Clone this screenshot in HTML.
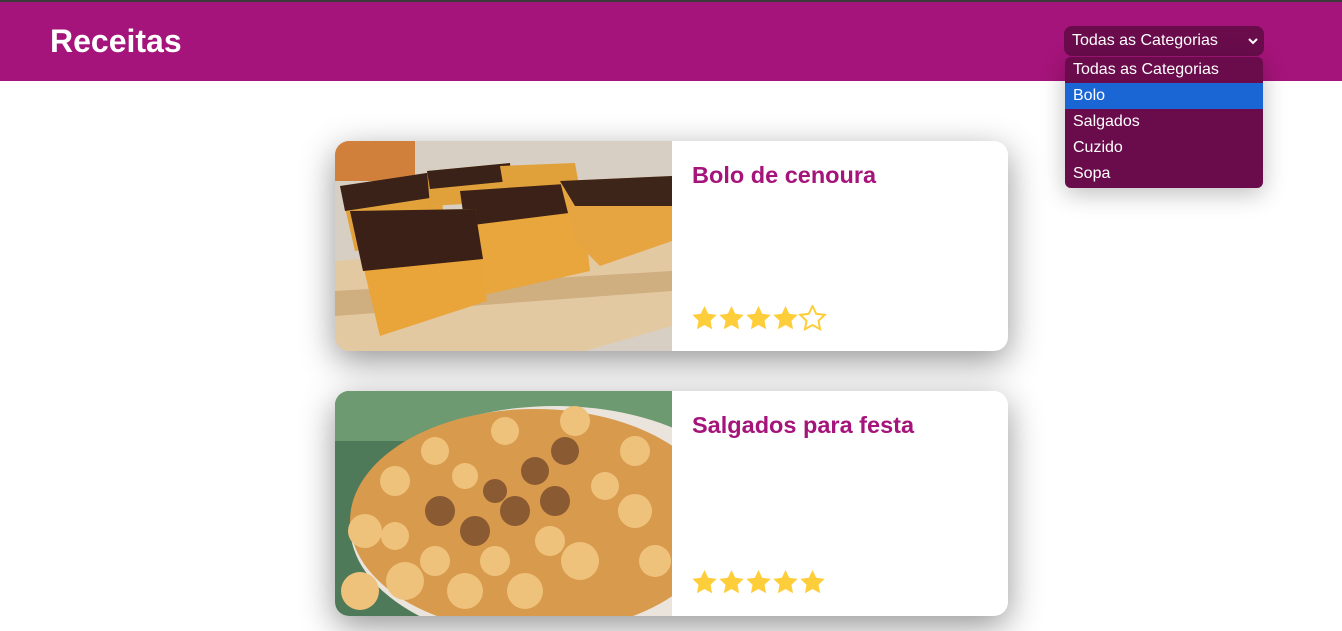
<!DOCTYPE html>
<html><head><meta charset="utf-8"><style>
*{margin:0;padding:0;box-sizing:border-box}
body{width:1342px;height:631px;overflow:hidden;background:#fff;font-family:"Liberation Sans",Arial,sans-serif;position:relative}
.top{position:absolute;left:0;top:0;width:1342px;height:2px;background:#3a3a3a}
header{position:absolute;left:0;top:2px;width:1342px;height:79px;background:#a5147a}
h1{position:absolute;left:50px;top:21px;color:#fff;font-size:32px;font-weight:bold}
.sel{position:absolute;left:1064px;top:26px;width:200px;height:30px;background:#6a0c4c;border-radius:8px;color:#fff;font-size:16px;padding:6px 8px}
.sel svg{position:absolute;right:6px;top:11px}
.dd{position:absolute;left:1065px;top:57px;width:198px;height:131px;background:#6a0c4c;border-radius:6px;box-shadow:0 6px 24px rgba(0,0,0,.25);overflow:hidden;color:#fff;font-size:16px}
.dd div{height:26px;line-height:25px;padding-left:8px}
.dd .h{background:#1a66d4}
.card{position:absolute;left:335px;width:673px;background:#fff;border-radius:14px;box-shadow:0 10px 34px rgba(0,0,0,.42);overflow:hidden}
.card svg.img{position:absolute;left:0;top:0}
.card h2{position:absolute;left:357px;top:21px;color:#a5147a;font-size:23.5px;font-weight:bold}
.stars{position:absolute;left:356px}
</style></head><body>
<div class="top"></div>
<header><h1>Receitas</h1></header>
<div class="sel">Todas as Categorias<svg width="10" height="8" viewBox="0 0 10 8"><path d="M1 2l4 4 4-4" stroke="#fff" stroke-width="2" fill="none"/></svg></div>
<div class="dd"><div>Todas as Categorias</div><div class="h">Bolo</div><div>Salgados</div><div>Cuzido</div><div>Sopa</div></div>

<div class="card" style="top:141px;height:210px">
<svg class="img" width="337" height="210" viewBox="0 0 337 210">
<rect width="337" height="210" fill="#d8cfc4"/>
<polygon points="0,120 337,95 337,185 250,210 0,210" fill="#e3c9a2"/>
<polygon points="0,150 337,130 337,150 0,175" fill="#cfae80"/>
<rect x="0" y="0" width="80" height="40" fill="#d0803a"/>
<polygon points="5,45 105,30 110,95 20,110" fill="#e3a13a"/>
<polygon points="5,45 105,30 108,55 10,70" fill="#3a2218"/>
<polygon points="92,30 175,22 178,60 95,65" fill="#e0a03a"/>
<polygon points="92,30 175,22 176,40 95,48" fill="#3a2218"/>
<polygon points="165,25 240,22 245,50 170,55" fill="#e0a03a"/>
<polygon points="125,50 245,42 255,130 145,155" fill="#e8a63c"/>
<polygon points="125,50 245,42 250,70 130,85" fill="#3b2117"/>
<polygon points="225,40 337,35 337,100 265,125 240,100" fill="#e6a540"/>
<polygon points="225,40 337,35 337,65 240,65" fill="#3e2519"/>
<polygon points="15,70 140,68 152,160 45,195" fill="#e9a43a"/>
<polygon points="15,70 140,68 148,118 28,130" fill="#3a2016"/>
</svg>
<h2>Bolo de cenoura</h2>
<svg class="stars" style="top:164px" width="140" height="30" viewBox="0 0 140 30">
<defs><path id="s" d="M13.5 1l3.7 7.8 8.5 1.1-6.2 5.9 1.6 8.4-7.6-4.2-7.6 4.2 1.6-8.4-6.2-5.9 8.5-1.1z"/></defs>
<use href="#s" fill="#fdce3a"/><use href="#s" x="27" fill="#fdce3a"/><use href="#s" x="54" fill="#fdce3a"/><use href="#s" x="81" fill="#fdce3a"/><use href="#s" x="108" fill="none" stroke="#fdce3a" stroke-width="2"/>
</svg>
</div>

<div class="card" style="top:391px;height:225px">
<svg class="img" width="337" height="225" viewBox="0 0 337 225">
<rect width="337" height="225" fill="#4f7a5a"/>
<rect x="0" y="0" width="337" height="50" fill="#6d9a70"/>
<ellipse cx="220" cy="135" rx="205" ry="120" fill="#eae4dc"/>
<ellipse cx="200" cy="130" rx="185" ry="112" fill="#d89a4c"/>
<g fill="#efc27c">
<circle cx="60" cy="90" r="15"/><circle cx="30" cy="140" r="17"/><circle cx="70" cy="190" r="19"/><circle cx="130" cy="200" r="18"/><circle cx="190" cy="200" r="18"/><circle cx="245" cy="170" r="19"/><circle cx="300" cy="120" r="17"/><circle cx="300" cy="60" r="15"/><circle cx="240" cy="30" r="15"/><circle cx="170" cy="40" r="14"/><circle cx="100" cy="60" r="14"/><circle cx="25" cy="200" r="19"/><circle cx="60" cy="145" r="14"/><circle cx="100" cy="170" r="15"/><circle cx="160" cy="170" r="15"/><circle cx="215" cy="150" r="15"/><circle cx="270" cy="95" r="14"/><circle cx="130" cy="85" r="13"/><circle cx="320" cy="170" r="16"/>
</g>
<g fill="#8a5a32">
<circle cx="105" cy="120" r="15"/><circle cx="140" cy="140" r="15"/><circle cx="180" cy="120" r="15"/><circle cx="220" cy="110" r="15"/><circle cx="200" cy="80" r="14"/><circle cx="230" cy="60" r="14"/><circle cx="160" cy="100" r="12"/>
</g>
</svg>
<h2>Salgados para festa</h2>
<svg class="stars" style="top:178px" width="140" height="30" viewBox="0 0 140 30">
<use href="#s" fill="#fdce3a"/><use href="#s" x="27" fill="#fdce3a"/><use href="#s" x="54" fill="#fdce3a"/><use href="#s" x="81" fill="#fdce3a"/><use href="#s" x="108" fill="#fdce3a"/>
</svg>
</div>
</body></html>
